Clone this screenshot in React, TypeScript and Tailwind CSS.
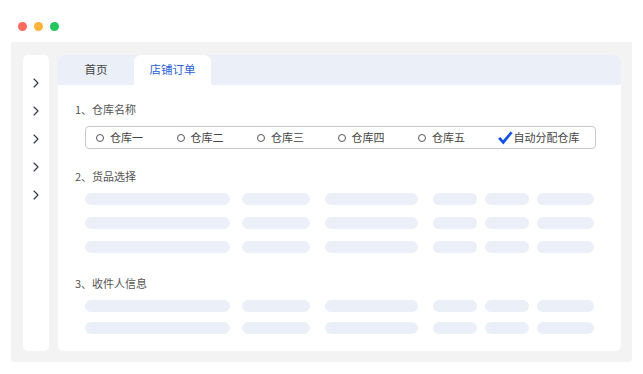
import React from 'react';

const font = { fontFamily: '"Noto Sans CJK SC", "Noto Sans", sans-serif' };

const warehouses = ['仓库一', '仓库二', '仓库三', '仓库四', '仓库五'];

// widths of the skeleton cells, left to right
const cols = [
  { w: 'w-[145px]', ml: 'ml-0' },
  { w: 'w-[68px]', ml: 'ml-[12px]' },
  { w: 'w-[93px]', ml: 'ml-[15px]' },
  { w: 'w-[44px]', ml: 'ml-[15px]' },
  { w: 'w-[44px]', ml: 'ml-[8px]' },
  { w: 'w-[57px]', ml: 'ml-[8px]' },
];

const SkeletonRow = () => (
  <div className="flex">
    {cols.map((c, i) => (
      <div key={i} className={`h-[12px] rounded-full bg-[#ebeff8] ${c.w} ${c.ml}`} />
    ))}
  </div>
);

const Chevron = () => (
  <svg width="8" height="10" viewBox="0 0 8 10" fill="none">
    <path d="M2 1 L6 5 L2 9" stroke="#2d3550" strokeWidth="1.1" strokeLinecap="round" strokeLinejoin="round" />
  </svg>
);

const Check = () => (
  <svg width="15" height="14" viewBox="0 0 15 14">
    <path d="M0 7.8 L2.4 6 L5 9.3 L12.6 0.6 L14.6 2 L5.4 13.4 Z" fill="#1553e6" />
  </svg>
);

export default function App() {
  return (
    <div className="w-[643px] h-[374px] bg-white overflow-hidden" style={font}>
      <div className="flex gap-[7px] pl-[18px] pt-[22px] h-[42px]">
        <span className="w-[9px] h-[9px] rounded-full bg-[#fd6b60]" />
        <span className="w-[9px] h-[9px] rounded-full bg-[#fdb43a]" />
        <span className="w-[9px] h-[9px] rounded-full bg-[#22c55e]" />
      </div>

      <div className="ml-[11px] w-[621px] h-[320px] bg-[#f3f3f3] rounded-b-[3px] flex gap-[9px] pl-[12px] pr-[11px] pt-[13px] pb-[11px]">
        <div className="w-[26px] bg-white rounded-[5px] flex flex-col items-center pt-[23px] gap-[18px]">
          {[0, 1, 2, 3, 4].map((i) => (
            <Chevron key={i} />
          ))}
        </div>

        <div className="flex-1 bg-white rounded-[6px] overflow-hidden flex flex-col">
          <div className="h-[30px] bg-[#ebeff8] flex items-stretch text-[11.5px]">
            <div className="w-[76px] flex items-center justify-center text-[#444]">首页</div>
            <div className="w-[77px] flex items-center justify-center bg-white rounded-t-[7px] text-[#2a5fd8]">店铺订单</div>
          </div>

          <div className="pl-[17px] pt-[16px] text-[11px] text-[#555]">
            <div className="leading-[16px]">1、仓库名称</div>
            <div className="mt-[9px] ml-[10px] w-[511px] h-[23px] border border-[#c8c8c8] rounded-[4px] flex items-center pl-[10px] text-[#444]">
              {warehouses.map((w) => (
                <div key={w} className="w-[80.5px] flex items-center gap-[6px] shrink-0">
                  <span className="w-[8px] h-[8px] rounded-full border border-[#555]" />
                  <span>{w}</span>
                </div>
              ))}
              <div className="flex items-center gap-[1px] -ml-[1px]">
                <Check />
                <span>自动分配仓库</span>
              </div>
            </div>

            <div className="mt-[19px] leading-[16px]">2、货品选择</div>
            <div className="mt-[9px] ml-[10px] flex flex-col gap-[12px]">
              <SkeletonRow />
              <SkeletonRow />
              <SkeletonRow />
            </div>

            <div className="mt-[22px] leading-[16px]">3、收件人信息</div>
            <div className="mt-[9px] ml-[10px] flex flex-col gap-[10px]">
              <SkeletonRow />
              <SkeletonRow />
            </div>
          </div>
        </div>
      </div>
    </div>
  );
}
